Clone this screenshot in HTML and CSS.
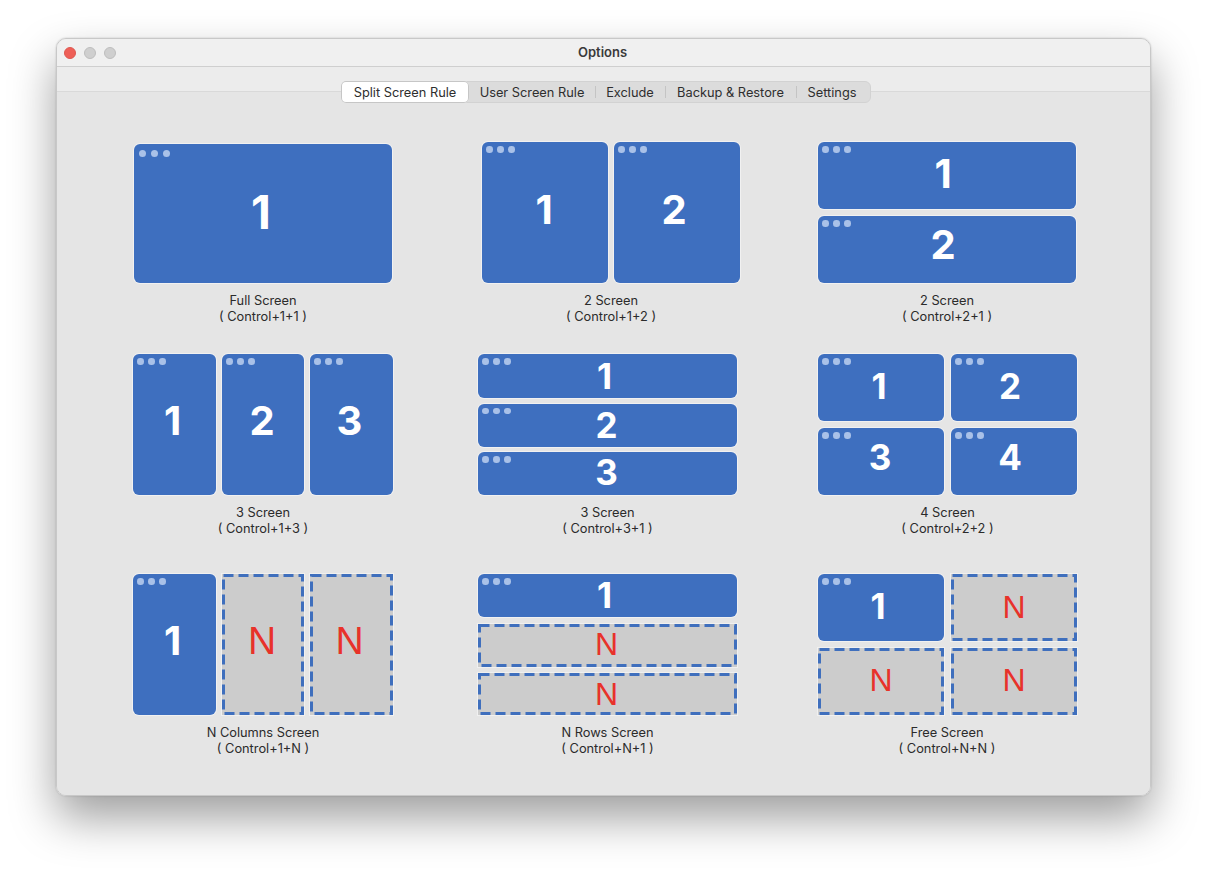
FILE: index.html
```html
<!DOCTYPE html>
<html lang="en">
<head>
<meta charset="utf-8">
<title>Options</title>
<link rel="stylesheet" href="styles.css">
</head>
<body>
<div class="window">
  <header class="titlebar">
    <div class="lights"><span class="light close"></span><span class="light"></span><span class="light"></span></div>
    <div class="title">Options</div>
  </header>
  <div class="toolbar"></div>
  <main class="panel">
    <nav class="tabs">
      <span class="tab active t1">Split Screen Rule</span>
      <span class="tab t2">User Screen Rule</span>
      <span class="tab t3 sep">Exclude</span>
      <span class="tab t4 sep">Backup &amp; Restore</span>
      <span class="tab t5 sep">Settings</span>
    </nav>
    <section class="rules">

      <article class="rule c-full">
        <div class="layout full"><div class="pane n46"><i class="dots"><b></b><b></b><b></b></i><span class="dx-2 dy-2">1</span></div></div>
        <p class="label">Full Screen<br>( Control+1+1 )</p>
      </article>

      <article class="rule c-two">
        <div class="layout cols2">
          <div class="pane n40"><i class="dots"><b></b><b></b><b></b></i><span class="dx-1 dy-3">1</span></div>
          <div class="pane n40"><i class="dots"><b></b><b></b><b></b></i><span class="dx-3 dy-3">2</span></div>
        </div>
        <p class="label">2 Screen<br>( Control+1+2 )</p>
      </article>

      <article class="rule c-right">
        <div class="layout rows2">
          <div class="pane n40"><i class="dots"><b></b><b></b><b></b></i><span class="dx-4 dy-2">1</span></div>
          <div class="pane n40"><i class="dots"><b></b><b></b><b></b></i><span class="dx-4 dy-5">2</span></div>
        </div>
        <p class="label">2 Screen<br>( Control+2+1 )</p>
      </article>

      <article class="rule c-left">
        <div class="layout cols3">
          <div class="pane n40"><i class="dots"><b></b><b></b><b></b></i><span class="dx-2 dy-4">1</span></div>
          <div class="pane n40"><i class="dots"><b></b><b></b><b></b></i><span class="dx-1 dy-4">2</span></div>
          <div class="pane n40"><i class="dots"><b></b><b></b><b></b></i><span class="dx-2 dy-4">3</span></div>
        </div>
        <p class="label">3 Screen<br>( Control+1+3 )</p>
      </article>

      <article class="rule c-mid">
        <div class="layout rows3">
          <div class="pane n35"><i class="dots"><b></b><b></b><b></b></i><span class="dx-3 dy0">1</span></div>
          <div class="pane n35"><i class="dots"><b></b><b></b><b></b></i><span class="dx-1 dy0">2</span></div>
          <div class="pane n35"><i class="dots"><b></b><b></b><b></b></i><span class="dx-1 dy-1">3</span></div>
        </div>
        <p class="label">3 Screen<br>( Control+3+1 )</p>
      </article>

      <article class="rule c-wide">
        <div class="layout quad">
          <div class="pane n35"><i class="dots"><b></b><b></b><b></b></i><span class="dx-2 dy-1">1</span></div>
          <div class="pane n35"><i class="dots"><b></b><b></b><b></b></i><span class="dx-4 dy-1">2</span></div>
          <div class="pane n35"><i class="dots"><b></b><b></b><b></b></i><span class="dx-1 dy-4">3</span></div>
          <div class="pane n35"><i class="dots"><b></b><b></b><b></b></i><span class="dx-4 dy-4">4</span></div>
        </div>
        <p class="label">4 Screen<br>( Control+2+2 )</p>
      </article>

      <article class="rule c-left">
        <div class="layout cols3">
          <div class="pane n40"><i class="dots"><b></b><b></b><b></b></i><span class="dx-2 dy-4">1</span></div>
          <div class="ghost n39"><svg class="dash"><rect class="dash-rect"/></svg><span class="dx-1 dy-4">N</span></div>
          <div class="ghost n39"><svg class="dash"><rect class="dash-rect"/></svg><span class="dx-2 dy-4">N</span></div>
        </div>
        <p class="label">N Columns Screen<br>( Control+1+N )</p>
      </article>

      <article class="rule c-mid">
        <div class="layout rows3 rows-n">
          <div class="pane n35"><i class="dots"><b></b><b></b><b></b></i><span class="dx-3 dy0">1</span></div>
          <div class="ghost n32"><svg class="dash"><rect class="dash-rect"/></svg><span class="dx-1 dy-1">N</span></div>
          <div class="ghost n32"><svg class="dash"><rect class="dash-rect"/></svg><span class="dx-1 dy0">N</span></div>
        </div>
        <p class="label">N Rows Screen<br>( Control+N+1 )</p>
      </article>

      <article class="rule c-right">
        <div class="layout quad">
          <div class="pane n35"><i class="dots"><b></b><b></b><b></b></i><span class="dx-3 dy-1">1</span></div>
          <div class="ghost n32"><svg class="dash"><rect class="dash-rect"/></svg><span class="dy-1">N</span></div>
          <div class="ghost n32"><svg class="dash"><rect class="dash-rect"/></svg><span class="dy-2">N</span></div>
          <div class="ghost n32"><svg class="dash"><rect class="dash-rect"/></svg><span class="dy-2">N</span></div>
        </div>
        <p class="label">Free Screen<br>( Control+N+N )</p>
      </article>

    </section>
  </main>
</div>
</body>
</html>
```
FILE: styles.css
```css
* { box-sizing: border-box; }
html, body { margin: 0; height: 100%; }
body {
  background: #fff;
  padding: 38px 56px 0;
  font-family: Inter, "Liberation Sans", sans-serif;
  color: #2b2b2b;
  overflow: hidden;
}
.window {
  width: 1095px;
  height: 758px;
  display: flex;
  flex-direction: column;
  border-radius: 10px;
  border: 1px solid #c8c8c8;
  background: #e5e5e5;
  overflow: hidden;
}
body::before {
  content: "";
  position: absolute;
  left: 56px; top: 38px;
  width: 1095px; height: 758px;
  border-radius: 10px;
  box-shadow: 0 22px 46px rgba(0,0,0,.38), 0 0 2px rgba(0,0,0,.2);
  z-index: -1;
}
.titlebar {
  height: 28px;
  flex: none;
  display: grid;
  grid-template-columns: 1fr auto 1fr;
  align-items: center;
  background: #f0f0f0;
  border-bottom: 1px solid #cfcfcf;
  padding: 0 7px;
}
.lights { display: flex; gap: 8px; }
.light {
  width: 12px; height: 12px;
  border-radius: 50%;
  background: #cfcfcf;
  border: 1px solid #bdbdbd;
}
.light.close { background: #ee5f57; border-color: #dd5850; }
.title {
  font-size: 13px;
  font-weight: 600;
  color: #3a3a3a;
  padding: 0 2px 2px 0;
}
.toolbar { height: 24px; flex: none; background: #ececec; }
.panel {
  flex: 1;
  border-top: 1px solid #d9d9d9;
  background: #e5e5e5;
  min-height: 0;
}
.tabs {
  display: flex;
  width: 530px;
  height: 22px;
  margin: -11px 0 0 284px;
  background: #dcdcdc;
  border: 1px solid #d2d2d2;
  border-radius: 6px;
  font-size: 12.8px;
}
.tab {
  display: flex;
  align-items: center;
  justify-content: center;
  position: relative;
  height: 20px;
  color: #2e2e2e;
}
.tab.active {
  background: #fff;
  border-radius: 5px;
  height: 22px;
  margin: -1px 0 -1px -1px;
  box-shadow: 0 0 0 1px #c6c6c6 inset;
}
.tab.sep::before {
  content: "";
  position: absolute;
  left: 0; top: 4px;
  height: 12px;
  width: 1px;
  background: #c4c4c4;
}
.t1 { width: 128px; }
.t2 { width: 126px; }
.t3 { width: 70px; }
.t4 { width: 131px; }
.t5 { width: 74px; padding-right: 2px; }

.rules {
  display: grid;
  grid-template-columns: 345px 340px 260px;
  grid-template-rows: 212px 220px auto;
  margin: 39px 0 0 76px;
}
.rule { display: flex; flex-direction: column; width: 260px; }
.c-full { margin-left: 1px; width: 258px; margin-top: 2px; }
.c-two { margin-left: 4px; width: 258px; }
.c-right { width: 258px; }
.c-left { width: 260px; }
.c-mid { width: 259px; }
.c-wide { width: 259px; }

.layout { display: grid; height: 141px; }
.c-full .layout { height: 139px; }
.full { grid-template-columns: 1fr; }
.cols2 { grid-template-columns: 126px 126px; column-gap: 6px; }
.rows2 { grid-template-rows: 67px 67px; row-gap: 7px; }
.cols3 { grid-template-columns: 83px 82px 83px; column-gap: 6px; }
.rows3 { grid-template-rows: 44px 43px 43px; row-gap: 5.5px; }
.rows-n { grid-template-rows: 43px 43px 42px; row-gap: 6.5px; }
.quad { grid-template-columns: 126px 126px; grid-template-rows: 67px 67px; gap: 7px; }

.pane {
  position: relative;
  display: flex;
  align-items: center;
  justify-content: center;
  background: #3e6fbf;
  box-shadow: 0 0 0 1px rgba(255,255,255,.45);
  border-radius: 6px;
  color: #fff;
  font-family: Inter, "Liberation Sans", sans-serif;
  font-weight: 700;
  min-width: 0;
}
.dots {
  position: absolute;
  left: 4px; top: 4px;
  display: flex;
  gap: 4.5px;
}
.dots b { width: 6.5px; height: 6.5px; border-radius: 50%; background: #a9c1e8; }
.full .dots { left: 5px; top: 6px; gap: 4.8px; }
.full .dots b { width: 7px; height: 7px; }
.ghost {
  position: relative;
  display: flex;
  align-items: center;
  justify-content: center;
  background: #cccccc;
  box-shadow: 0 0 0 1px #f0f0f0;
  color: #e8322a;
  font-family: "Liberation Sans", sans-serif;
  min-width: 0;
}
.dash { position: absolute; inset: 0; width: 100%; height: 100%; }
.dash-rect {
  x: 1.5px; y: 1.5px;
  width: calc(100% - 3px);
  height: calc(100% - 3px);
  fill: none;
  stroke: #3f6fbd;
  stroke-width: 3;
  stroke-dasharray: 10 5;
}
.ghost span, .pane span { position: relative; line-height: 1; }
.dx-1 { left: -1px; }
.dx-2 { left: -2px; }
.dx-3 { left: -3px; }
.dx-4 { left: -4px; }
.dy0 { top: 0; }
.dy-1 { top: -1px; }
.dy-2 { top: -2px; }
.dy-3 { top: -3px; }
.dy-4 { top: -4px; }
.dy-5 { top: -5px; }
.n46 { font-size: 46px; }
.n40 { font-size: 40px; }
.n39 { font-size: 39px; }
.n35 { font-size: 35px; }
.n32 { font-size: 32px; }
.label {
  margin: 10px 0 0;
  text-align: center;
  font-size: 12.8px;
  line-height: 16px;
  color: #2b2b2b;
}
```
